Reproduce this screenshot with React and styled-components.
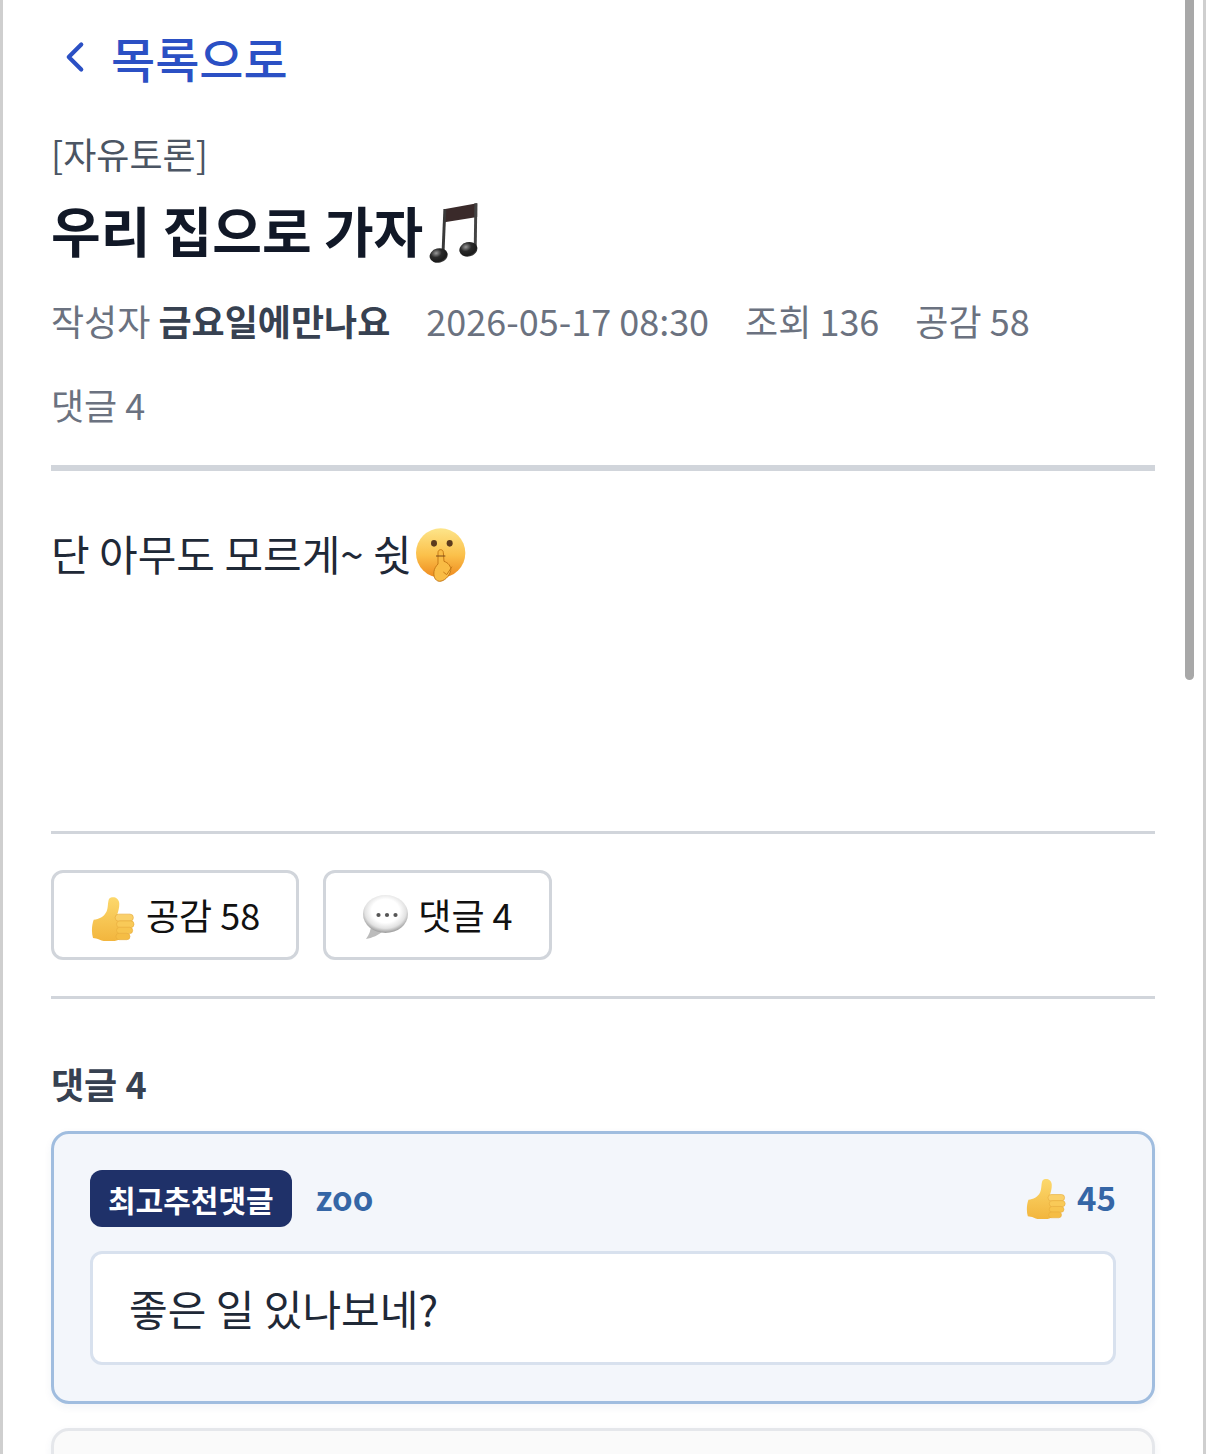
import { ChevronLeft } from 'lucide-react';
import styled, { createGlobalStyle } from 'styled-components';

const GlobalStyle = createGlobalStyle`
  html, body {
    margin: 0;
    padding: 0;
    background: #fff;
    overflow: hidden;
  }

  * {
    box-sizing: border-box;
  }
`;

const Page = styled.div`
  position: relative;
  height: 1454px;
  overflow: hidden;
  padding: 0 48px;
  background: #fff;
  border-left: 3px solid #cfcfcf;
  border-right: 3px solid #cfcfcf;
  font-family: "Noto Sans CJK KR", "Noto Sans", sans-serif;
`;

const ScrollThumb = styled.div`
  position: absolute;
  top: -20px;
  right: 9px;
  width: 9px;
  height: 700px;
  border-radius: 5px;
  background: #a8a8a8;
`;

const BackLink = styled.a`
  display: flex;
  align-items: center;
  gap: 11px;
  height: 58px;
  margin: 28px 0 0 -1px;
  color: #2b50c4;
  font-size: 48px;
  font-weight: 500;
  line-height: 58px;
`;

const Category = styled.div`
  margin-top: 38px;
  color: #4b5563;
  font-size: 36px;
  line-height: 58px;
`;

const Title = styled.h1`
  display: flex;
  align-items: center;
  gap: 6px;
  margin: 6px 0 0;
  color: #111827;
  font-size: 54px;
  font-weight: 700;
  line-height: 84px;
`;

const Meta = styled.div`
  display: flex;
  flex-wrap: wrap;
  column-gap: 36px;
  row-gap: 26px;
  margin-top: 19px;
  padding-bottom: 32px;
  border-bottom: 6px solid #d1d5db;
  color: #6b7280;
  font-size: 36px;
  line-height: 58px;
`;

const Author = styled.strong`
  color: #374151;
  font-weight: 700;
`;

const Body = styled.div`
  display: flex;
  align-items: flex-start;
  gap: 4px;
  height: 363px;
  padding-top: 55px;
  border-bottom: 3px solid #d1d5db;
  color: #1f2937;
  font-size: 42px;
  line-height: 54px;
`;

const Actions = styled.div`
  display: flex;
  gap: 24px;
  padding: 36px 0;
  border-bottom: 3px solid #d1d5db;
`;

const ActionButton = styled.button`
  display: flex;
  align-items: center;
  gap: 10px;
  height: 90px;
  padding: 0 36px 2px 37px;
  border: 3px solid #d1d5db;
  border-radius: 12px;
  background: #fff;
  color: #111;
  font-family: inherit;
  font-size: 36px;
`;

const SectionTitle = styled.h2`
  margin: 55px 0 19px;
  color: #374151;
  font-size: 36px;
  font-weight: 700;
  line-height: 58px;
`;

const CommentCard = styled.article`
  margin-bottom: 24px;
  padding: 36px;
  border: 3px solid ${props => props.$best ? '#a0bddf' : '#e5e7eb'};
  border-radius: 18px;
  background: ${props => props.$best ? '#f3f6fb' : '#fafafa'};
  box-shadow: 0 3px 9px rgba(30, 60, 114, 0.06);
`;

const CommentHead = styled.div`
  display: flex;
  align-items: center;
  gap: 24px;
`;

const Badge = styled.span`
  display: flex;
  align-items: center;
  height: 57px;
  padding: 0 18px;
  border-radius: 12px;
  background: #1f3169;
  color: #fff;
  font-size: 30px;
  font-weight: 700;
`;

const Nick = styled.span`
  padding-bottom: 4px;
  color: #3566a6;
  font-size: 33px;
  font-weight: 700;
`;

const Likes = styled.span`
  display: flex;
  align-items: center;
  gap: 10px;
  margin-left: auto;
  padding-bottom: 3px;
  color: #3566a6;
  font-size: 33px;
  font-weight: 700;
`;

const CommentBody = styled.div`
  height: 114px;
  margin-top: 24px;
  padding: 0 36px;
  border: 3px solid #d8e1ee;
  border-radius: 12px;
  background: #fff;
  color: #1f2937;
  font-size: 42px;
  line-height: 108px;
`;

const EmojiSvg = styled.svg`
  flex: none;
  margin-top: ${props => props.$drop || 0}px;
`;

const ThumbIcon = ({ size = 45, drop = 8 }) => (
  <EmojiSvg $drop={drop} width={size} height={size} viewBox="36 30 134 134" aria-hidden="true">
    <defs>
      <linearGradient id="thumbFill" x1="0" y1="0" x2="0" y2="1">
        <stop offset="0" stopColor="#fcd86c" />
        <stop offset="1" stopColor="#f2b53d" />
      </linearGradient>
    </defs>
    <path
      d="M90 38c10-9 28-4 30 12 1 12-2 24-6 36l8 72c-16 10-44 10-60 2-8-4-14-4-20-5-5-16-4-38 2-54 16-3 30-8 38-24 6-12 3-29 8-39z"
      fill="url(#thumbFill)"
    />
    <rect x="108" y="84" width="54" height="21" rx="10" fill="#fad06a" stroke="#e8ac3c" strokeWidth="2" />
    <rect x="112" y="104" width="52" height="20" rx="10" fill="#f9ca58" stroke="#e8ac3c" strokeWidth="2" />
    <rect x="112" y="123" width="48" height="19" rx="9.5" fill="#f7c44e" stroke="#e8ac3c" strokeWidth="2" />
    <rect x="110" y="141" width="42" height="19" rx="9.5" fill="#f5bd45" stroke="#e8ac3c" strokeWidth="2" />
  </EmojiSvg>
);

const BubbleIcon = () => (
  <EmojiSvg $drop={6} width="45" height="45" viewBox="0 0 45 45" aria-hidden="true">
    <defs>
      <radialGradient id="bubbleFill" cx="0.5" cy="0.42" r="0.56">
        <stop offset="0.55" stopColor="#ffffff" />
        <stop offset="0.82" stopColor="#e2e2e2" />
        <stop offset="1" stopColor="#a4a4a4" />
      </radialGradient>
    </defs>
    <path d="M8 30c0 5-2 10-5 14 6-1 13-4 17-8z" fill="#bcbcbc" />
    <ellipse cx="22.5" cy="19" rx="22.5" ry="19" fill="url(#bubbleFill)" />
    <circle cx="15.5" cy="20" r="2.1" fill="#555" />
    <circle cx="24" cy="20" r="2.1" fill="#555" />
    <circle cx="32.5" cy="20" r="2.1" fill="#555" />
  </EmojiSvg>
);

const ShushIcon = () => (
  <EmojiSvg $drop={2} width="50" height="54" viewBox="26 24 150 162" aria-hidden="true">
    <defs>
      <linearGradient id="shushFace" x1="0" y1="0" x2="0" y2="1">
        <stop offset="0" stopColor="#fde58a" />
        <stop offset="0.55" stopColor="#fbc04a" />
        <stop offset="1" stopColor="#ee8a1e" />
      </linearGradient>
    </defs>
    <circle cx="100" cy="99" r="74" fill="url(#shushFace)" />
    <ellipse cx="80" cy="70" rx="9" ry="10" fill="#5c3a1e" />
    <ellipse cx="127" cy="70" rx="9" ry="10" fill="#5c3a1e" />
    <path
      d="M92 98c0-12 16-12 16 0l2 26c12 4 22 14 20 28-4 18-20 32-34 32-14-2-18-16-16-30 1-8 6-16 12-22z"
      fill="#f9bc45"
      stroke="#c77a16"
      strokeWidth="3"
    />
    <path d="M108 156l10 8 16-24" fill="none" stroke="#c77a16" strokeWidth="3" />
    <path d="M86 108h28" stroke="#7a4a1a" strokeWidth="3" />
  </EmojiSvg>
);

const NotesIcon = () => (
  <EmojiSvg $drop={6} width="50" height="62" viewBox="56 34 150 190" aria-hidden="true">
    <defs>
      <radialGradient id="noteHead" cx="0.4" cy="0.3" r="0.75">
        <stop offset="0" stopColor="#9a9a9a" />
        <stop offset="0.4" stopColor="#2a2a2a" />
        <stop offset="0.8" stopColor="#1a1a1a" />
        <stop offset="1" stopColor="#555" />
      </radialGradient>
    </defs>
    <path d="M100 56l102-18v42l-100 16z" fill="#3a2a2a" />
    <path d="M103 56l-6 142" stroke="#3a3a3a" strokeWidth="9" fill="none" />
    <path d="M198 38l-2 140" stroke="#444" strokeWidth="9" fill="none" />
    <ellipse cx="84" cy="198" rx="28" ry="22" transform="rotate(-14 84 198)" fill="url(#noteHead)" />
    <ellipse cx="175" cy="179" rx="28" ry="22" transform="rotate(-14 175 179)" fill="url(#noteHead)" />
  </EmojiSvg>
);

const App = () => (
  <>
    <GlobalStyle />
    <Page>
      <BackLink>
        <ChevronLeft size={50} strokeWidth={2} />
        목록으로
      </BackLink>

      <Category>[자유토론]</Category>
      <Title>
        우리 집으로 가자
        <NotesIcon />
      </Title>

      <Meta>
        <span>작성자 <Author>금요일에만나요</Author></span>
        <span>2026-05-17 08:30</span>
        <span>조회 136</span>
        <span>공감 58</span>
        <span>댓글 4</span>
      </Meta>

      <Body>
        단 아무도 모르게~ 쉿
        <ShushIcon />
      </Body>

      <Actions>
        <ActionButton>
          <ThumbIcon />
          공감 58
        </ActionButton>
        <ActionButton>
          <BubbleIcon />
          댓글 4
        </ActionButton>
      </Actions>

      <SectionTitle>댓글 4</SectionTitle>

      <CommentCard $best>
        <CommentHead>
          <Badge>최고추천댓글</Badge>
          <Nick>zoo</Nick>
          <Likes>
            <ThumbIcon size={41} drop={2} />
            45
          </Likes>
        </CommentHead>
        <CommentBody>좋은 일 있나보네?</CommentBody>
      </CommentCard>

      <CommentCard />
      <ScrollThumb />
    </Page>
  </>
);

export default App;
